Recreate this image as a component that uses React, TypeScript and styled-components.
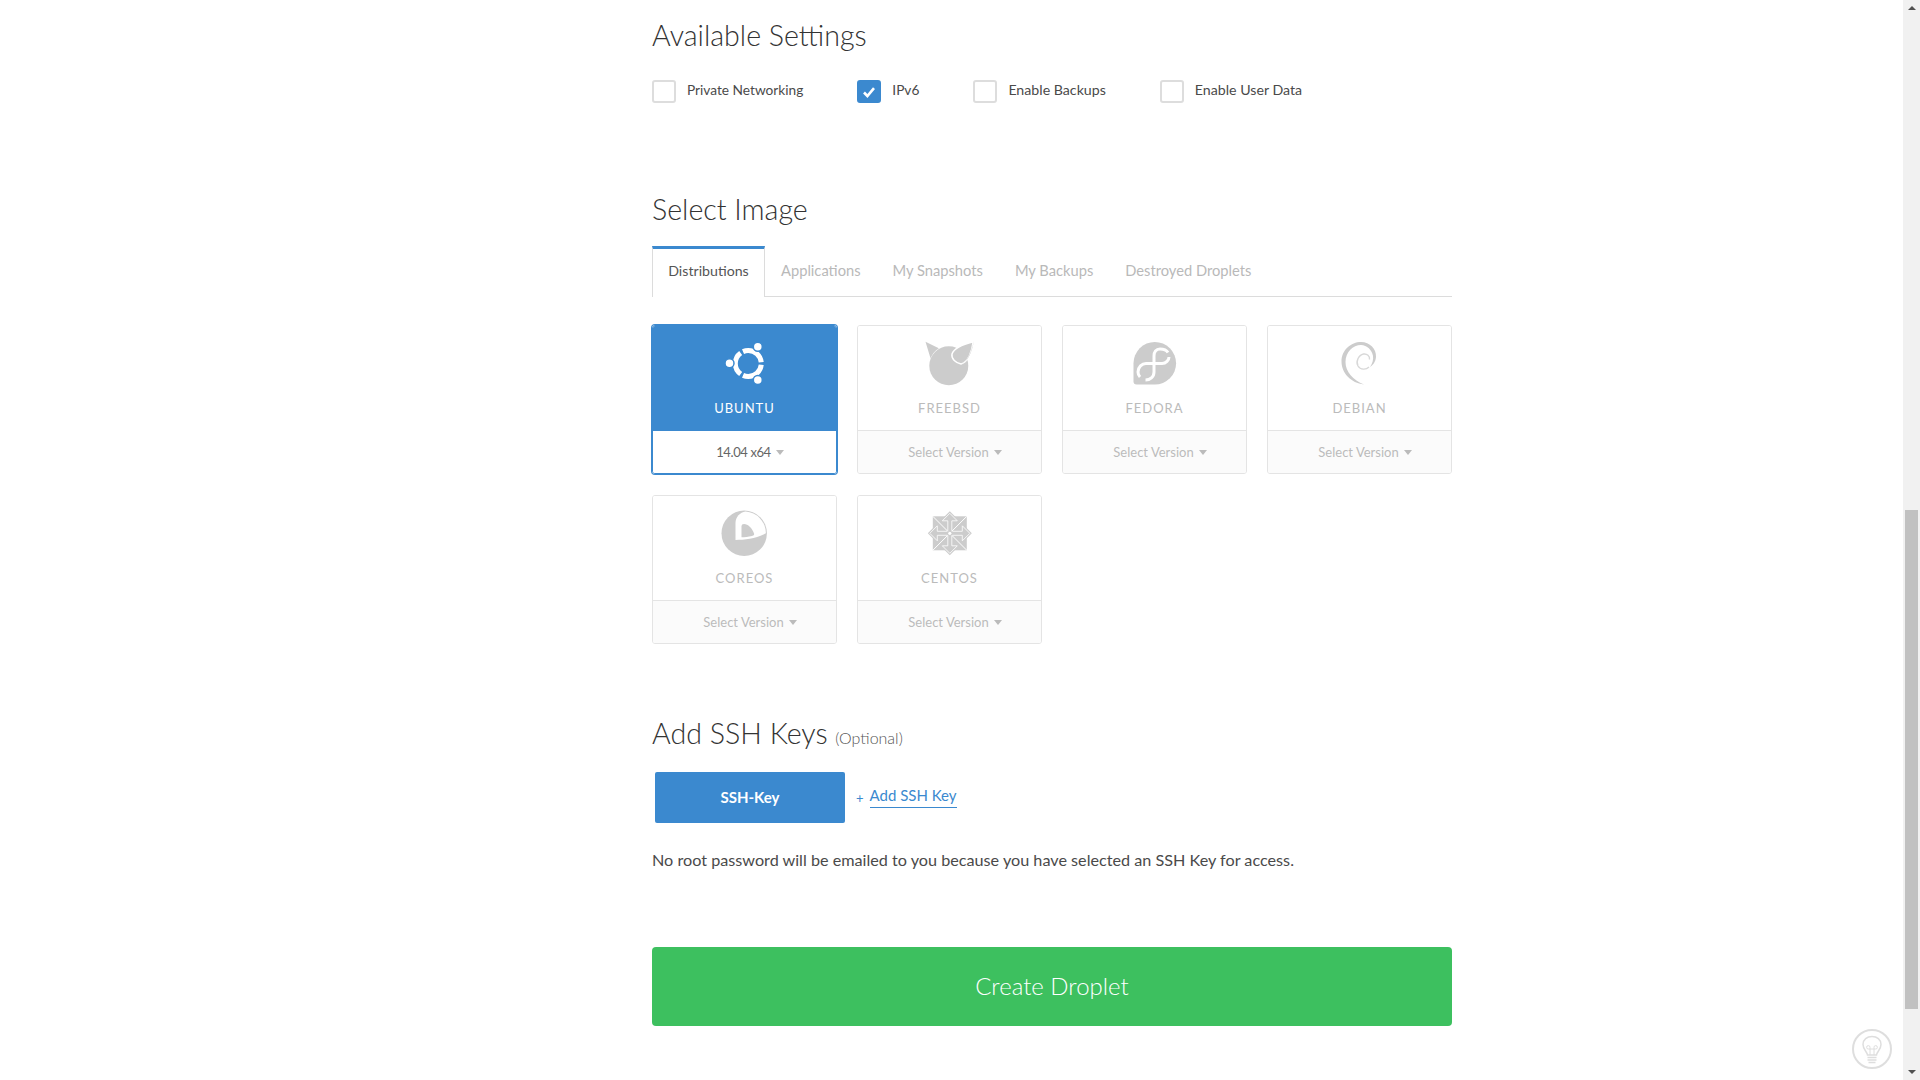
import React from 'react'
import { createGlobalStyle, styled } from 'styled-components'

const BLUE = '#3b89cf'
const ICON = '#cccccc'

const GlobalStyle = createGlobalStyle`
  html, body {
    margin: 0;
    padding: 0;
    height: 100%;
    background: #fff;
    overflow: hidden;
  }
  body {
    font-family: Lato, "Open Sans", "Liberation Sans", sans-serif;
    color: #444;
  }
  * { box-sizing: border-box; }
`

const UbuntuLogo = () => (
  <svg width="60" height="60" viewBox="0 0 60 60" fill="#fff">
    <circle
      cx="33.3"
      cy="28.5"
      r="13"
      fill="none"
      stroke="#fff"
      strokeWidth="5"
      pathLength={360}
      strokeDasharray="108 12"
      strokeDashoffset="-6"
    />
    <g stroke={BLUE} strokeWidth="1.5">
      <circle cx="14.5" cy="28.3" r="4.5" />
      <circle cx="42.8" cy="11.7" r="4.5" />
      <circle cx="42.8" cy="45" r="4.5" />
    </g>
  </svg>
)

const FreebsdLogo = () => (
  <svg width="60" height="60" viewBox="0 0 60 60" fill={ICON}>
    <circle cx="28.8" cy="30.7" r="19.5" />
    <path d="M5.5 6.7L18.8 13.3C15 15.5 12.5 19 10.5 23.3Z" />
    <path
      d="M53.2 6.7C44 9 34 13 32 19C31 24 36 28 41 29C48 27 52 17 53.2 6.7Z"
      stroke="#fff"
      strokeWidth="1.5"
    />
    <path d="M54 5.5C52.5 12 50 22 44 27.5L41 29C48 27 52 17 54 5.5Z" />
  </svg>
)

const FedoraLogo = () => (
  <svg width="60" height="60" viewBox="0 0 60 60">
    <path
      d="M8.5 28.3A21.3 21.3 0 1 1 29.8 49.6H11.5A3 3 0 0 1 8.5 46.6Z"
      fill={ICON}
    />
    <path
      d="M15 42C13.5 40.5 13 39 13 37C13 32 17 28.5 21 28.5H37C41 28.5 44 25 44 22M43 17.5C41.5 15 38 14 35 14C31 14 29 17 29 21V37C29 42 25 45 20.5 45"
      fill="none"
      stroke="#fff"
      strokeWidth="3"
    />
  </svg>
)

const DebianLogo = () => (
  <svg width="60" height="60" viewBox="0 0 60 60">
    <path
      d="M34 49.5C21 48 11.5 38 11.5 26.5C11.5 15 21 7 31 7C40 7 46.5 14 46 22C45.5 27 43 30 40 32C42.5 28 43.5 25 43 21C42 15 37 10 31 10C23 10 15.5 17 15.5 27C15.5 37 23 45 34 49.5Z"
      fill={ICON}
    />
    <path
      d="M39 32C36 35 30.5 35 28 31C25.5 26.5 28.5 20 33.5 19C37 18.5 40 21 39.5 24.5"
      fill="none"
      stroke="#d8d8d8"
      strokeWidth="1.4"
    />
  </svg>
)

const CoreosLogo = () => (
  <svg width="60" height="60" viewBox="0 0 60 60">
    <circle cx="29.2" cy="28.3" r="22.7" fill={ICON} />
    <path
      d="M20.5 35V18C20.5 12 25 7.5 30.5 6.6A21.7 21.7 0 0 1 50.9 28.3C42 33.5 30 35 20.5 35Z"
      fill="#fff"
    />
    <path
      d="M26.5 21Q26.5 19 29 19C33 19 37 23 39 28.5C39.5 30 38.5 30.5 37 31C33 32 30 32.3 26.5 32.3Z"
      fill={ICON}
    />
  </svg>
)

const CentosLogo = () => (
  <svg width="60" height="60" viewBox="0 0 60 60">
    <rect x="12.8" y="11.3" width="34" height="34" fill={ICON} />
    <path d="M29.8 6.3L51.8 28.3L29.8 50.3L7.8 28.3Z" fill={ICON} />
    <g transform="translate(29.8 28.3)" fill="none" stroke="#fff" strokeWidth="0.8">
      {[0, 90, 180, 270].map((deg) => (
        <g key={deg} transform={`rotate(${deg})`}>
          <path d="M-2 -2.5V-12.5H-7.5L0 -20L7.5 -12.5H2V-2.5" />
          <path d="M-17 -17L-2 -2" strokeWidth="1" />
        </g>
      ))}
      <circle r="1.6" fill="#fff" stroke="none" />
    </g>
  </svg>
)

const IMAGES = [
  { name: 'Ubuntu', version: '14.04 x64', logo: <UbuntuLogo />, selected: true },
  { name: 'FreeBSD', version: 'Select Version', logo: <FreebsdLogo /> },
  { name: 'Fedora', version: 'Select Version', logo: <FedoraLogo /> },
  { name: 'Debian', version: 'Select Version', logo: <DebianLogo /> },
  { name: 'CoreOS', version: 'Select Version', logo: <CoreosLogo /> },
  { name: 'CentOS', version: 'Select Version', logo: <CentosLogo /> },
]

const SETTINGS = [
  { label: 'Private Networking' },
  { label: 'IPv6', checked: true },
  { label: 'Enable Backups', wide: true },
  { label: 'Enable User Data', wide: true },
]

const TABS = ['Distributions', 'Applications', 'My Snapshots', 'My Backups', 'Destroyed Droplets']

export default function App() {
  return (
    <Screen>
      <GlobalStyle />
      <Page>
        <Content>
          <Heading>Available Settings</Heading>
          <Settings>
            {SETTINGS.map((s) => (
              <Setting key={s.label} $wide={s.wide}>
                <Box $checked={s.checked}>
                  {s.checked && (
                    <svg width="14" height="12" viewBox="0 0 14 12">
                      <path d="M2 6.5L5.4 10L12 2.2" fill="none" stroke="#fff" strokeWidth="2.6" />
                    </svg>
                  )}
                </Box>
                {s.label}
              </Setting>
            ))}
          </Settings>

          <ImageHeading>Select Image</ImageHeading>
          <Tabs>
            {TABS.map((t, i) => (
              <Tab key={t} $active={i === 0}>
                {t}
              </Tab>
            ))}
          </Tabs>
          <Cards>
            {IMAGES.map((img) => (
              <Card key={img.name} $selected={img.selected}>
                <CardHead $selected={img.selected}>
                  {img.logo}
                  <CardName>{img.name}</CardName>
                </CardHead>
                <CardFoot $selected={img.selected}>
                  {img.version}
                  <Caret />
                </CardFoot>
              </Card>
            ))}
          </Cards>

          <SshHeading>
            Add SSH Keys <small>(Optional)</small>
          </SshHeading>
          <SshRow>
            <SshKey>SSH-Key</SshKey>
            <Plus>+</Plus>
            <AddKey>Add SSH Key</AddKey>
          </SshRow>
          <Note>No root password will be emailed to you because you have selected an SSH Key for access.</Note>
          <CreateButton>Create Droplet</CreateButton>
        </Content>
      </Page>
      <Scrollbar>
        <ArrowUp />
        <Track>
          <Thumb />
        </Track>
        <ArrowDown />
      </Scrollbar>
      <Bulb>
        <svg width="40" height="40" viewBox="0 0 40 40" fill="none" stroke="#dedede">
          <circle cx="20" cy="20" r="19" strokeWidth="2" />
          <path
            d="M15.5 26C15 22.5 11 20.5 11 15.5C11 10.5 15 7.5 20 7.5C25 7.5 29 10.5 29 15.5C29 20.5 25 22.5 24.5 26Z"
            strokeWidth="1.5"
          />
          <path d="M18 26V18.5A1.7 1.7 0 1 0 16.5 20H23.5A1.7 1.7 0 1 0 22 18.5V26" strokeWidth="1" />
          <path d="M15.5 28.5H24.5M15.5 31H24.5M16.5 33.5H23.5" strokeWidth="1.6" />
        </svg>
      </Bulb>
    </Screen>
  )
}

const Screen = styled.div`
  display: flex;
  width: 100%;
  height: 1080px;
  overflow: hidden;
  position: relative;
`
const Page = styled.main`
  flex: 1;
  padding: 19px 0 0 652px;
`
const Content = styled.div`
  width: 800px;
`
const Heading = styled.h2`
  margin: 0;
  font-size: 28.6px;
  line-height: 32px;
  font-weight: 300;
  color: #333;
`
const ImageHeading = styled(Heading)`
  margin-top: 90px;
`
const SshHeading = styled(Heading)`
  margin-top: 73px;

  small {
    font-size: 16px;
    color: #555;
  }
`
const Settings = styled.div`
  display: flex;
  gap: 54px;
  margin-top: 29px;
`
const Setting = styled.label<{ $wide?: boolean }>`
  display: flex;
  align-items: flex-start;
  gap: 11px;
  font-size: ${(p) => (p.$wide ? '14.2px' : '13.7px')};
  line-height: 20px;
  color: #4a4a4a;
`
const Box = styled.span<{ $checked?: boolean }>`
  display: flex;
  align-items: center;
  justify-content: center;
  width: 24px;
  height: 23px;
  border-radius: 3px;
  border: 2px solid ${(p) => (p.$checked ? BLUE : '#dddddd')};
  background: ${(p) => (p.$checked ? BLUE : '#fff')};
`
const Tabs = styled.div`
  display: flex;
  height: 51px;
  margin-top: 21px;
  border-bottom: 1px solid #dcdcdc;
`
const Tab = styled.div<{ $active?: boolean }>`
  display: flex;
  align-items: center;
  justify-content: center;
  padding: 0 16px 3px;
  font-size: 14.7px;
  color: #b9b9b9;
  ${(p) =>
    p.$active &&
    `
    width: 113px;
    height: 51px;
    padding: 0 0 5px;
    font-size: 14.2px;
    color: #555;
    background: #fff;
    border: 1px solid #dcdcdc;
    border-top: 3px solid ${BLUE};
    border-bottom: none;
  `}
`
const Cards = styled.div`
  display: grid;
  grid-template-columns: repeat(4, 185px);
  grid-auto-rows: 149px;
  column-gap: 20px;
  row-gap: 21px;
  margin-top: 28px;
`
const Card = styled.div<{ $selected?: boolean }>`
  display: flex;
  flex-direction: column;
  border: 1px solid ${(p) => (p.$selected ? BLUE : '#e4e4e4')};
  border-radius: 3px;
  overflow: hidden;
  ${(p) => p.$selected && `box-shadow: 0 0 0 1px ${BLUE};`}
`
const CardHead = styled.div<{ $selected?: boolean }>`
  flex: 0 0 104px;
  display: flex;
  flex-direction: column;
  align-items: center;
  padding-top: 9px;
  background: ${(p) => (p.$selected ? BLUE : '#fff')};
  color: ${(p) => (p.$selected ? '#fff' : '#bbb')};
`
const CardName = styled.div`
  margin-top: 5px;
  font-size: 13px;
  line-height: 17px;
  letter-spacing: 1px;
  text-transform: uppercase;
`
const CardFoot = styled.div<{ $selected?: boolean }>`
  flex: 1;
  display: flex;
  align-items: center;
  justify-content: center;
  gap: 5px;
  padding-left: 11px;
  font-size: 13px;
  color: ${(p) => (p.$selected ? '#666' : '#bbb')};
  background: ${(p) => (p.$selected ? '#fff' : '#fbfbfb')};
  border-top: 1px solid ${(p) => (p.$selected ? BLUE : '#e4e4e4')};
  letter-spacing: ${(p) => (p.$selected ? '-0.4px' : '0')};
`
const Caret = styled.span`
  width: 0;
  height: 0;
  border-left: 4.5px solid transparent;
  border-right: 4.5px solid transparent;
  border-top: 5px solid #bbb;
`
const SshRow = styled.div`
  display: flex;
  align-items: center;
  margin: 18px 0 0 3px;
`
const SshKey = styled.div`
  display: flex;
  align-items: center;
  justify-content: center;
  width: 190px;
  height: 51px;
  padding-bottom: 2px;
  border-radius: 2px;
  background: ${BLUE};
  color: #fff;
  font-size: 15px;
  font-weight: 700;
`
const Plus = styled.span`
  margin-left: 11px;
  font-size: 13px;
  color: ${BLUE};
`
const AddKey = styled.span`
  margin: -2px 0 0 6px;
  padding: 0 0 3px;
  font-size: 15px;
  color: ${BLUE};
  border-bottom: 1px solid ${BLUE};
`
const Note = styled.p`
  margin: 26px 0 0;
  font-size: 16.2px;
  line-height: 22px;
  color: #4a4a4a;
`
const CreateButton = styled.div`
  display: flex;
  align-items: center;
  justify-content: center;
  height: 79px;
  margin-top: 76px;
  padding-bottom: 2px;
  border-radius: 4px;
  background: #3dc05f;
  color: #fff;
  font-size: 24px;
  font-weight: 300;
`
const Scrollbar = styled.aside`
  flex: 0 0 17px;
  display: flex;
  flex-direction: column;
  align-items: center;
  background: #f1f1f1;
`
const ArrowUp = styled.span`
  margin-top: 6px;
  width: 0;
  height: 0;
  border-left: 4px solid transparent;
  border-right: 4px solid transparent;
  border-bottom: 4px solid #505050;
`
const ArrowDown = styled.span`
  margin-bottom: 6px;
  width: 0;
  height: 0;
  border-left: 4px solid transparent;
  border-right: 4px solid transparent;
  border-top: 4px solid #505050;
`
const Track = styled.div`
  flex: 1;
  width: 100%;
  padding: 500px 2px 0 2px;
`
const Thumb = styled.div`
  height: 499px;
  background: #c1c1c1;
`
const Bulb = styled.div`
  position: absolute;
  left: 1852px;
  top: 1029px;
  width: 40px;
  height: 40px;
`
